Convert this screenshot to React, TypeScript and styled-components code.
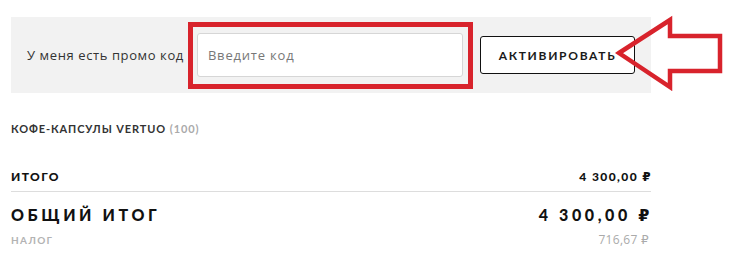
import React from "react";
import styled, { createGlobalStyle } from "styled-components";

const GlobalStyle = createGlobalStyle`
  body {
    margin: 0;
    background: #ffffff;
    font-family: "Open Sans", "DejaVu Sans", sans-serif;
  }
`;

const summary = {
  product: "Кофе-капсулы Vertuo",
  count: 100,
  subtotal: "4 300,00 ₽",
  total: "4 300,00 ₽",
  tax: "716,67 ₽",
};

function App() {
  return (
    <Page>
      <GlobalStyle />
      <PromoPanel>
        <PromoLabel>У меня есть промо код</PromoLabel>
        <Highlight>
          <CodeInput placeholder="Введите код" />
        </Highlight>
        <ActivateButton>Активировать</ActivateButton>
      </PromoPanel>

      <Summary>
        <ProductLine>
          {summary.product} <Count>({summary.count})</Count>
        </ProductLine>
        <SubtotalRow>
          <SubtotalLabel>Итого</SubtotalLabel>
          <SubtotalLabel>{summary.subtotal}</SubtotalLabel>
        </SubtotalRow>
        <TotalRow>
          <TotalText>Общий итог</TotalText>
          <TotalText>{summary.total}</TotalText>
        </TotalRow>
        <TaxRow>
          <TaxLabel>Налог</TaxLabel>
          <TaxValue>{summary.tax}</TaxValue>
        </TaxRow>
      </Summary>

      <Arrow width="112" height="76" viewBox="0 0 112 76">
        <polygon
          points="4,38 55,5 55,21 105,21 105,56 55,56 55,72"
          fill="none"
          stroke="#d8232c"
          strokeWidth="4.5"
          strokeLinejoin="miter"
        />
      </Arrow>
    </Page>
  );
}

const Page = styled.div`
  position: relative;
  width: 749px;
  height: 267px;
  padding: 17px 0 0 11px;
  box-sizing: border-box;
`;

const PromoPanel = styled.div`
  display: flex;
  align-items: center;
  width: 640px;
  height: 76px;
  box-sizing: border-box;
  padding: 0 16px;
  background: #f2f2f2;
`;

const PromoLabel = styled.span`
  font-size: 13px;
  letter-spacing: 0.6px;
  color: #333333;
  white-space: nowrap;
  margin-right: 4px;
`;

const Highlight = styled.div`
  flex: 1;
  display: flex;
  border: 5px solid #d8232c;
  padding: 6px 5px 7px 4px;
  margin-right: 7px;
`;

const CodeInput = styled.input`
  flex: 1;
  height: 44px;
  box-sizing: border-box;
  border: 1px solid #d6d6d6;
  border-radius: 3px;
  padding: 0 10px;
  font-family: "Open Sans", "DejaVu Sans", sans-serif;
  font-size: 13px;
  letter-spacing: 0.8px;
  background: #ffffff;
  outline: none;

  &::placeholder {
    color: #777777;
  }
`;

const ActivateButton = styled.button`
  width: 155px;
  height: 38px;
  border: 1px solid #111111;
  border-radius: 3px;
  background: #ffffff;
  font-family: "Lato", "DejaVu Sans", sans-serif;
  font-weight: 700;
  font-size: 12px;
  letter-spacing: 1.7px;
  text-transform: uppercase;
  color: #1a1a1a;
  cursor: pointer;
`;

const Summary = styled.div`
  width: 640px;
  font-family: "Lato", "DejaVu Sans", sans-serif;
  color: #111111;
`;

const ProductLine = styled.div`
  margin-top: 26px;
  line-height: 20px;
  font-size: 11px;
  font-weight: 700;
  letter-spacing: 0.9px;
  text-transform: uppercase;
  color: #333333;
`;

const Count = styled.span`
  color: #aaaaaa;
`;

const Row = styled.div`
  display: flex;
  justify-content: space-between;
  align-items: center;
`;

const SubtotalRow = styled(Row)`
  margin-top: 22px;
  height: 30px;
  border-bottom: 1px solid #dddddd;
`;

const SubtotalLabel = styled.span`
  font-size: 12px;
  font-weight: 900;
  letter-spacing: 1.4px;
  text-transform: uppercase;
  margin-right: -1px;
`;

const TotalRow = styled(Row)`
  padding-top: 11px;
  line-height: 24px;
`;

const TotalText = styled.span`
  font-size: 16px;
  font-weight: 900;
  letter-spacing: 3.6px;
  text-transform: uppercase;
  margin-right: -2px;
`;

const TaxRow = styled(Row)`
  margin-top: 6px;
  line-height: 14px;
`;

const TaxLabel = styled.span`
  font-size: 10px;
  font-weight: 700;
  letter-spacing: 1.3px;
  text-transform: uppercase;
  color: #b3b3b3;
`;

const TaxValue = styled.span`
  font-family: "Open Sans", "DejaVu Sans", sans-serif;
  font-size: 12px;
  letter-spacing: 0.3px;
  color: #aaaaaa;
  margin-right: 2px;
`;

const Arrow = styled.svg`
  position: absolute;
  left: 615px;
  top: 15px;
`;

export default App;
